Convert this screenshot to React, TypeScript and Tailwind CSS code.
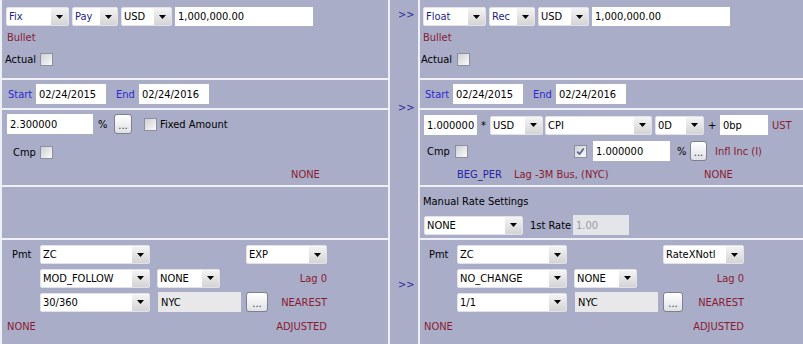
import type { ReactNode } from 'react'

const red = 'text-[#8a1a30]'

function Arrow() {
  return (
    <svg width="7" height="4" viewBox="0 0 7 4">
      <path d="M0 0h7L3.5 4z" fill="#000" />
    </svg>
  )
}

function Combo({ w, text, blue, cls = '' }: { w: string; text: string; blue?: boolean; cls?: string }) {
  return (
    <div className={`${w} ${cls} flex h-[19px] shrink-0 items-stretch overflow-hidden rounded-[2px] border border-[#e2e3ea] bg-white`}>
      <span className={`flex-1 truncate pl-[2px] leading-[17px] ${blue ? 'text-[#1c1c84]' : 'text-black'}`}>{text}</span>
      <span className="flex w-[17px] items-center justify-center bg-linear-to-b from-[#f5f5f5] to-[#d4d4d6]">
        <Arrow />
      </span>
    </div>
  )
}

function Field({ w, value, h = 'h-[20px]', cls = '', gray, disabled }: { w: string; value: string; h?: string; cls?: string; gray?: boolean; disabled?: boolean }) {
  return (
    <div
      className={`${w} ${h} ${cls} flex shrink-0 items-center pl-[3px] ${
        disabled ? 'bg-[#e4e5ea] text-[#9a9aa0]' : gray ? 'bg-[#e8e8ea] text-black' : 'bg-white text-black'
      }`}
    >
      {value}
    </div>
  )
}

function Check({ checked, cls = '' }: { checked?: boolean; cls?: string }) {
  return (
    <span className={`${cls} flex h-[13px] w-[13px] shrink-0 items-center justify-center border border-[#8d8f9e] bg-linear-to-br from-[#cfd0d6] to-[#fbfbfb]`}>
      {checked && (
        <svg width="11" height="11" viewBox="0 0 11 11">
          <path d="M2.2 5.6 4.6 8 8.8 2.6" fill="none" stroke="#55608e" strokeWidth="1.7" />
        </svg>
      )}
    </span>
  )
}

function Dots({ w, cls = '' }: { w: string; cls?: string }) {
  return (
    <span className={`${w} ${cls} flex h-[20px] shrink-0 items-end justify-center rounded-[3px] border border-[#7f808c] bg-linear-to-b from-white to-[#e0e1e6] pb-[2px] leading-[10px] text-[#333]`}>
      ...
    </span>
  )
}

function Section({ h, pad, children }: { h: string; pad: string; children?: ReactNode }) {
  return <section className={`${h} ${pad} shrink-0 bg-[#a9adc8]`}>{children}</section>
}

function Schedule({ pad, pmt, conv, right, dc, dots }: { pad: string; pmt: string; conv: string; right: string; dc: string; dots: string }) {
  return (
    <section className={`${pad} flex-1 bg-[#a9adc8] pt-[5px]`}>
      <div className="flex h-[19px] w-[321px] items-center">
        <span className="ml-[6px] w-[28px]">Pmt</span>
        <Combo w="w-[110px]" text="ZC" />
        <Combo w="w-[81px]" text={pmt} cls="ml-auto" />
      </div>
      <div className="mt-[4px] flex h-[20px] w-[321px] items-center">
        <Combo w="w-[110px]" text={conv} cls="ml-[34px]" />
        <Combo w="w-[63px]" text="NONE" cls="ml-[7px]" />
        <span className={`ml-auto ${red}`}>Lag 0</span>
      </div>
      <div className="mt-[4px] flex h-[20px] w-[321px] items-center">
        <Combo w="w-[110px]" text={dc} cls="ml-[34px]" />
        <Field w="w-[83px]" value="NYC" gray cls="ml-[8px]" />
        <Dots w={dots} cls="ml-[5px]" />
        <span className={`ml-auto ${red}`}>{right}</span>
      </div>
      <div className="mt-[8px] flex w-[321px]">
        <span className={`ml-[1px] ${red}`}>NONE</span>
        <span className={`ml-auto ${red}`}>ADJUSTED</span>
      </div>
    </section>
  )
}

export default function App() {
  return (
    <div className="flex h-[344px] w-[803px] overflow-hidden bg-[#eef0f6] font-['DejaVu_Sans_Condensed','Liberation_Sans',sans-serif] text-[11px] leading-[13px] text-black">
      {/* fixed leg */}
      <div className="ml-[2px] flex w-[386px] shrink-0 flex-col gap-[2px]">
        <Section h="h-[78px]" pad="pl-[4px] pt-[7px]">
          <div className="flex gap-[3px]">
            <Combo w="w-[63px]" text="Fix" blue />
            <Combo w="w-[46px]" text="Pay" blue />
            <Combo w="w-[51px]" text="USD" />
            <Field w="w-[138px]" h="h-[19px]" value="1,000,000.00" />
          </div>
          <div className={`mt-[5px] pl-[1px] ${red}`}>Bullet</div>
          <div className="mt-[9px] flex h-[13px] items-center">
            <span className="-ml-[1px] w-[35px]">Actual</span>
            <Check />
          </div>
        </Section>

        <Section h="h-[28px]" pad="pl-[4px] flex items-center">
          <span className="ml-[2px] w-[28px] text-[#2a2ad0]">Start</span>
          <Field w="w-[70px]" value="02/24/2015" />
          <span className="ml-[10px] w-[23px] text-[#2a2ad0]">End</span>
          <Field w="w-[70px]" value="02/24/2016" />
        </Section>

        <Section h="h-[75px]" pad="pl-[4px] pt-[4px]">
          <div className="flex h-[20px] items-center">
            <Field w="w-[86px]" value="2.300000" cls="ml-[1px]" />
            <span className="ml-[5px] w-[16px]">%</span>
            <Dots w="w-[18px]" />
            <Check cls="ml-[12px]" />
            <span className="ml-[3px]">Fixed Amount</span>
          </div>
          <div className="mt-[12px] flex h-[13px] items-center">
            <span className="ml-[7px] w-[27px]">Cmp</span>
            <Check />
          </div>
          <div className={`mt-[9px] ml-[285px] ${red}`}>NONE</div>
        </Section>

        <Section h="h-[51px]" pad="" />

        <Schedule pad="pl-[4px]" pmt="EXP" conv="MOD_FOLLOW" right="NEAREST" dc="30/360" dots="w-[22px]" />
      </div>

      {/* copy buttons */}
      <div className="ml-[2px] flex w-[28px] shrink-0 flex-col bg-[#a9adc8] pl-[8px] text-[#2a2a9a]">
        <span className="mt-[8px]">&gt;&gt;</span>
        <span className="mt-[80px]">&gt;&gt;</span>
        <span className="mt-[164px]">&gt;&gt;</span>
      </div>

      {/* float leg */}
      <div className="ml-[2px] flex flex-1 flex-col gap-[2px]">
        <Section h="h-[78px]" pad="pl-[3px] pt-[7px]">
          <div className="flex gap-[3px]">
            <Combo w="w-[63px]" text="Float" blue />
            <Combo w="w-[46px]" text="Rec" blue />
            <Combo w="w-[51px]" text="USD" />
            <Field w="w-[138px]" h="h-[19px]" value="1,000,000.00" />
          </div>
          <div className={`mt-[5px] ${red}`}>Bullet</div>
          <div className="mt-[9px] flex h-[13px] items-center">
            <span className="-ml-[2px] w-[36px]">Actual</span>
            <Check />
          </div>
        </Section>

        <Section h="h-[28px]" pad="pl-[3px] flex items-center">
          <span className="ml-[2px] w-[28px] text-[#2a2ad0]">Start</span>
          <Field w="w-[70px]" value="02/24/2015" />
          <span className="ml-[10px] w-[23px] text-[#2a2ad0]">End</span>
          <Field w="w-[70px]" value="02/24/2016" />
        </Section>

        <Section h="h-[75px]" pad="pl-[3px] pt-[5px]">
          <div className="flex h-[20px] items-center">
            <Field w="w-[53px]" value="1.000000" cls="ml-[1px]" />
            <span className="ml-[4px] w-[9px]">*</span>
            <Combo w="w-[53px]" text="USD" />
            <Combo w="w-[107px]" text="CPI" cls="ml-[2px]" />
            <Combo w="w-[49px]" text="0D" cls="ml-[3px]" />
            <span className="ml-[4px] w-[12px]">+</span>
            <Field w="w-[48px]" value="0bp" />
            <span className={`ml-[4px] ${red}`}>UST</span>
          </div>
          <div className="mt-[6px] flex h-[20px] items-center">
            <span className="ml-[4px] w-[28px]">Cmp</span>
            <Check />
            <Check checked cls="ml-[106px]" />
            <Field w="w-[77px]" value="1.000000" cls="ml-[6px]" />
            <span className="ml-[7px] w-[13px]">%</span>
            <Dots w="w-[17px]" />
            <span className={`ml-[8px] ${red}`}>Infl Inc (I)</span>
          </div>
          <div className="mt-[7px] flex h-[13px] items-center">
            <span className="ml-[34px] w-[57px] text-[#2424a0]">BEG_PER</span>
            <span className={`w-[190px] ${red}`}>Lag -3M Bus, (NYC)</span>
            <span className={red}>NONE</span>
          </div>
        </Section>

        <Section h="h-[51px]" pad="pl-[3px] pt-[8px]">
          <div>Manual Rate Settings</div>
          <div className="mt-[7px] flex h-[20px] items-center">
            <Combo w="w-[99px]" text="NONE" cls="ml-[1px]" />
            <span className="ml-[7px] w-[43px]">1st Rate</span>
            <Field w="w-[56px]" value="1.00" disabled />
          </div>
        </Section>

        <Schedule pad="pl-[3px]" pmt="RateXNotl" conv="NO_CHANGE" right="NEAREST" dc="1/1" dots="w-[20px]" />
      </div>
    </div>
  )
}
